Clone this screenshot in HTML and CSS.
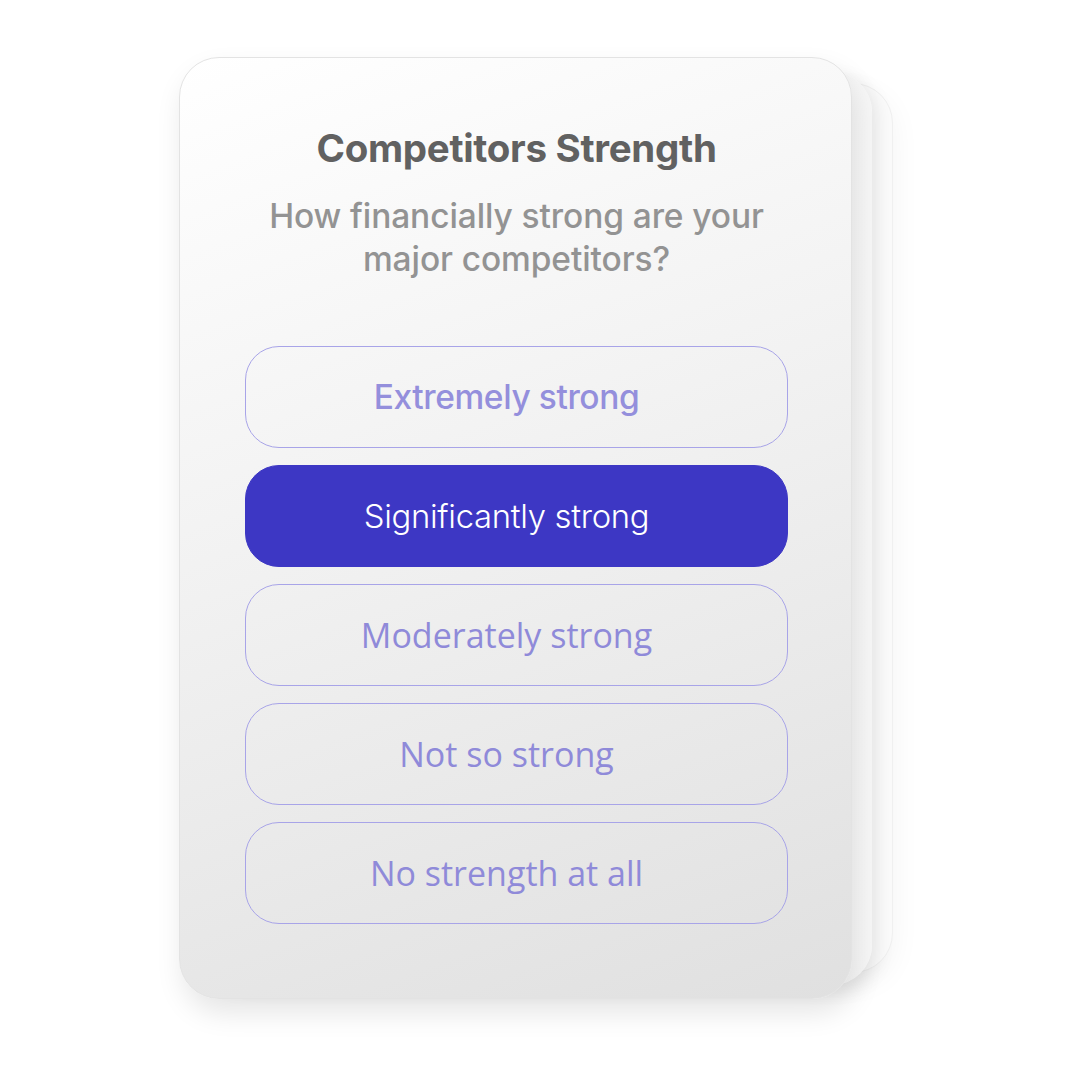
FILE: index.html
```html
<!DOCTYPE html>
<html lang="en">
<head>
<meta charset="utf-8">
<title>Competitors Strength</title>
<link rel="stylesheet" href="styles.css">
</head>
<body>
<div class="stage">
  <div class="stack">
    <div class="card">
      <h1 class="title">Competitors Strength</h1>
      <p class="question">How financially strong are your<br>major competitors?</p>
      <div class="options">
        <div class="option sf">Extremely strong</div>
        <div class="option selected">Significantly strong</div>
        <div class="option seg">Moderately strong</div>
        <div class="option seg">Not so strong</div>
        <div class="option seg">No strength at all</div>
      </div>
    </div>
  </div>
</div>
</body>
</html>
```
FILE: styles.css
```css
html, body {
  margin: 0;
  padding: 0;
  background: #ffffff;
}
.stage {
  width: 1080px;
  height: 1080px;
  padding: 57px 0 0 179px;
  box-sizing: border-box;
}
.stack {
  position: relative;
  width: 673px;
  height: 942px;
}
.stack::before,
.stack::after {
  content: "";
  position: absolute;
  border-radius: 40px;
}
.stack::before {
  left: 40px;
  right: -41px;
  top: 26px;
  bottom: 26px;
  background: #fbfbfb;
  box-shadow: 0 10px 30px rgba(0,0,0,0.05);
  border: 1px solid #f0f0f0;
}
.stack::after {
  left: 20px;
  right: -20px;
  top: 15px;
  bottom: 14px;
  background: linear-gradient(90deg, #ececec, #f7f7f7);
  box-shadow: 6px 6px 18px rgba(0,0,0,0.08);
}
.card {
  position: relative;
  z-index: 1;
  width: 100%;
  height: 100%;
  box-sizing: border-box;
  border-radius: 40px;
  background: linear-gradient(160deg, #ffffff 0%, #f3f3f3 40%, #e0e0e0 100%);
  border: 1px solid #e3e3e3;
  box-shadow: 4px 14px 28px rgba(0,0,0,0.10);
  padding: 66px 63px 0 65px;
  display: flex;
  flex-direction: column;
  align-items: stretch;
  font-family: Inter, "Liberation Sans", sans-serif;
}
.title {
  margin: 0;
  text-align: center;
  font-size: 38.5px;
  font-weight: 700;
  color: #616161;
  letter-spacing: -0.3px;
  line-height: 48px;
}
.question {
  margin: 23px 0 0 0;
  text-align: center;
  font-size: 33.5px;
  font-weight: 500;
  color: #939393;
  line-height: 43px;
  letter-spacing: -0.1px;
}
.options {
  margin-top: 65px;
  display: flex;
  flex-direction: column;
  gap: 17px;
}
.option {
  height: 102px;
  box-sizing: border-box;
  border: 1px solid #a8a4e8;
  border-radius: 34px;
  display: flex;
  align-items: center;
  justify-content: center;
  padding-right: 20px;
  font-size: 33.5px;
  color: #948fdc;
  font-family: Inter, "Liberation Sans", sans-serif;
}
.option.sf {
  font-weight: 500;
  letter-spacing: -0.4px;
}
.option.selected {
  background: #3d37c4;
  border-color: #3d37c4;
  color: #ffffff;
  font-weight: 300;
  font-size: 32.8px;
  letter-spacing: -0.3px;
}
.option.seg {
  font-family: "Open Sans", "Noto Sans", sans-serif;
  font-weight: 400;
  font-size: 34px;
  color: #8f8ad9;
}
```
